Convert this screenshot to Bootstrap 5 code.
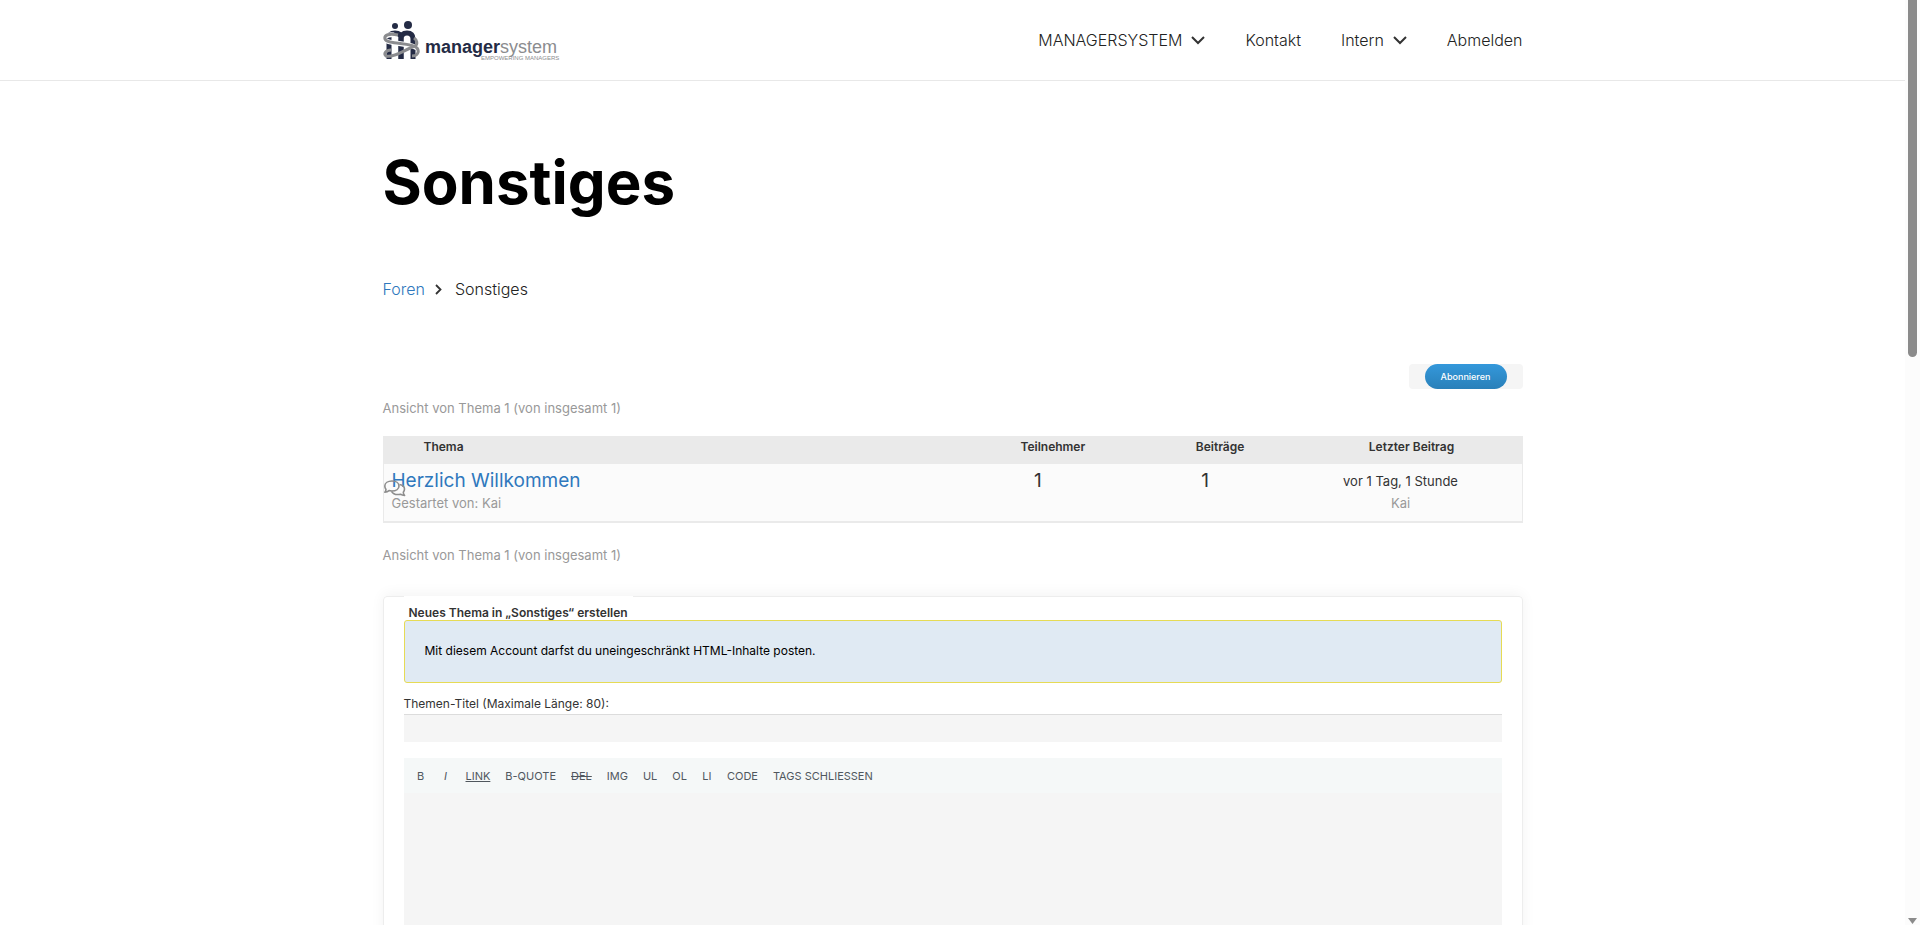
<!DOCTYPE html>
<html lang="de">
<head>
<meta charset="utf-8">
<meta name="viewport" content="width=device-width, initial-scale=1">
<title>Sonstiges – managersystem</title>
<link rel="stylesheet" href="https://cdn.jsdelivr.net/npm/bootstrap@5.3.0/dist/css/bootstrap.min.css">
<style>
  html { overflow: hidden; }
  body { font-family: Inter, "Liberation Sans", sans-serif; font-size: 13px; line-height: 20px; color: #333; padding-right: 15px; height: 100vh; overflow: hidden; }
  a { color: #2f78bd; text-decoration: none; }
  .page-width { max-width: 1140px; margin: 0 auto; }
  .site-header { height: 81px; border-bottom: 1px solid #e8e8e8; }
  .site-nav { font-size: 16px; font-weight: 300; gap: 40px; }
  .site-nav a { color: #222; display: flex; align-items: center; gap: 9px; }
  .brand-text { font-family: "Liberation Sans", sans-serif; }
  .page-title { font-size: 60px; line-height: 76px; font-weight: 700; color: #000; margin: 63px 0 0; }
  .crumbs { font-size: 16px; line-height: 24px; font-weight: 300; margin-top: 57px; gap: 10px; }
  .crumbs span { margin-left: 3px; color: #222; }
  .subscribe { width: 114px; height: 25px; background: #f5f5f5; border-radius: 4px; margin: 63px 0 0 auto; }
  .subscribe button { display: block; width: 82px; height: 25px; margin: 0 auto; border: 0; border-radius: 13px; background: linear-gradient(#3498db, #2980b9); color: #fff; font-size: 9px; font-weight: 500; line-height: 25px; padding: 0; }
  .count-note { color: #999; line-height: 20px; margin: 9px 0 18px; }
  .count-note-end { margin: 22px 0 0; }
  .topics { width: 100%; table-layout: fixed; border: 1px solid #eaeaea; border-bottom: 2px solid #eaeaea; border-collapse: separate; border-spacing: 0; background: #fbfbfb; }
  .topics th { height: 27px; background: #eaeaea; font-size: 12px; line-height: 20px; font-weight: 600; text-align: center; vertical-align: top; padding: 0 0 0 30px; }
  .topics th:first-child { text-align: left; padding-left: 40px; }
  .topics th:last-child { padding-right: 36px; }
  .topics td { height: 57px; text-align: center; vertical-align: top; padding: 5px 0 0; font-size: 19px; line-height: 24px; }
  .topics td:first-child { text-align: left; padding-left: 8px; position: relative; }
  .topics td:last-child { font-size: 13px; padding-right: 28px; }
  .topics small { display: block; font-size: 13px; line-height: 20px; color: #999; }
  .topics small a { color: #999; }
  .topic-icon { position: absolute; left: 0; top: 16px; }
  .new-topic { border: 1px solid #ededed; border-radius: 4px; box-shadow: 0 -2px 14px rgba(0,0,0,.05); background: #fff; padding: 0 20px 20px; margin-top: 31px; font-size: 12px; }
  .new-topic legend { width: auto; font-size: 12px; line-height: 16px; font-weight: 600; background: #fff; margin: -1px 0 -2px; padding: 9px 5px 1px; }
  .html-notice { clear: both; height: 63px; border: 1px solid #e6db55; border-radius: 3px; background: #e0eaf3; color: #000; padding: 20px; margin: 0; position: relative; }
  .title-label { display: block; line-height: 20px; margin-top: 11px; }
  .title-input { display: block; width: 100%; height: 28px; border: 0; border-top: 1px solid #dcdcdc; background: #f5f5f5; }
  .tags-bar { height: 35px; background: #f5f8f8; margin-top: 16px; padding-left: 5px; gap: 1px; }
  .tags-bar button { border: 0; background: none; min-width: 24px; padding: 0 7px; font-size: 11px; line-height: 20px; color: #50575e; }
  .topic-text { display: block; width: 100%; height: 240px; border: 0; background: #f5f5f5; resize: none; }
  .scroll-rail { position: fixed; top: 0; right: 0; bottom: 0; width: 15px; background: #fcfcfc; }
  .scroll-thumb { width: 9px; height: 357px; margin: 0 auto; background: #8b8b8b; border-radius: 0 0 5px 5px; }
  .scroll-arrow { position: absolute; left: 3px; bottom: 1px; }
</style>
</head>
<body>
<header class="site-header">
  <div class="page-width h-100 d-flex align-items-center justify-content-between">
    <a href="#" aria-label="managersystem">
      <svg width="180" height="42" viewBox="0 0 180 42" class="d-block">
        <g fill="none" stroke="#242b45" stroke-width="5">
          <path d="M6 40V19q0-5 6-5t6 5V40"/>
          <path d="M18 40V20q0-6 6-6t6 6V40"/>
        </g>
        <circle cx="12" cy="7" r="3" fill="#242b45"/><circle cx="25" cy="6" r="4" fill="#242b45"/>
        <g fill="none" stroke="#fff" stroke-width="5"><path d="M11 16C4 15 0 18 2 21c3 4 25 3 32 8"/></g>
        <g fill="none" stroke="#8b8c8f" stroke-width="3"><path d="M15 16C6 14 1 16 2 20c2 6 27 3 32 9 3 4 0 8-5 8"/><path d="M8 31c-5 0-8 4-5 6 8 2 18-6 29-10 3-2 2-6-1-8"/></g>
        <g class="brand-text"><text x="42" y="34" font-size="18" font-weight="700" fill="#242b45">manager</text><text x="117" y="34" font-size="18" fill="#8b8c8f">system</text></g>
        <text class="brand-text" x="98" y="41" font-size="6" fill="#8b8c8f">EMPOWERING MANAGERS</text>
      </svg>
    </a>
    <nav class="site-nav d-flex" aria-label="Hauptmenü">
      <a href="#">MANAGERSYSTEM <svg width="14" height="9" viewBox="0 0 14 9"><path d="M1 1l6 6 6-6" fill="none" stroke="#333" stroke-width="2"/></svg></a>
      <a href="#">Kontakt</a>
      <a href="#">Intern <svg width="14" height="9" viewBox="0 0 14 9"><path d="M1 1l6 6 6-6" fill="none" stroke="#333" stroke-width="2"/></svg></a>
      <a href="#">Abmelden</a>
    </nav>
  </div>
</header>

<main class="page-width">
  <h1 class="page-title">Sonstiges</h1>
  <nav class="crumbs d-flex align-items-center" aria-label="Brotkrumen">
    <a href="#">Foren</a>
    <svg width="7" height="11" viewBox="0 0 7 11"><path d="M1 1l4.500 4.500L1 10" fill="none" stroke="#333" stroke-width="1.800"/></svg>
    <span>Sonstiges</span>
  </nav>
  <div class="subscribe"><button type="button">Abonnieren</button></div>
  <p class="count-note">Ansicht von Thema 1 (von insgesamt 1)</p>
  <table class="topics">
    <colgroup><col style="width:51.8%"><col style="width:11.4%"><col style="width:18%"><col></colgroup>
    <thead><tr><th>Thema</th><th>Teilnehmer</th><th>Beiträge</th><th>Letzter Beitrag</th></tr></thead>
    <tbody><tr>
      <td>
        <svg class="topic-icon" width="22" height="18" viewBox="0 0 22 18" fill="none" stroke="#8d8d8d" stroke-width="1.600" stroke-linejoin="round"><path d="M8 1c4 0 7 2 7 5s-3 5-7 5c-1 0-2 0-3-.4C4 11.500 3 12 .8 12.200c.8-.8 1.200-1.600 1.200-2.700C1.300 8.500.8 7.300.8 6 .8 3 4 1 8 1z"/><path d="M15.500 4.500c3 .5 5 2.300 5 4.600 0 1.300-.4 2.200-1.200 3.100 0 1.300.4 2.300 1.300 3.300-2-.1-3.200-.6-4.200-1.300-4 .8-7.400-.3-8.900-2.900"/></svg>
        <a href="#">Herzlich Willkommen</a>
        <small>Gestartet von: <a href="#">Kai</a></small>
      </td>
      <td>1</td><td>1</td>
      <td>vor 1 Tag, 1 Stunde<small><a href="#">Kai</a></small></td>
    </tr></tbody>
  </table>
  <p class="count-note count-note-end">Ansicht von Thema 1 (von insgesamt 1)</p>

  <form>
    <fieldset class="new-topic">
      <legend>Neues Thema in „Sonstiges“ erstellen</legend>
      <p class="html-notice">Mit diesem Account darfst du uneingeschränkt HTML-Inhalte posten.</p>
      <label class="title-label" for="topic-title">Themen-Titel (Maximale Länge: 80):</label>
      <input class="title-input" id="topic-title" type="text" maxlength="80">
      <div class="tags-bar d-flex align-items-center">
        <button type="button">B</button><button type="button" class="fst-italic">I</button><button type="button" class="text-decoration-underline">LINK</button><button type="button">B-QUOTE</button><button type="button" class="text-decoration-line-through">DEL</button><button type="button">IMG</button><button type="button">UL</button><button type="button">OL</button><button type="button">LI</button><button type="button">CODE</button><button type="button">TAGS SCHLIESSEN</button>
      </div>
      <textarea class="topic-text" aria-label="Beitrag"></textarea>
    </fieldset>
  </form>
</main>

<div class="scroll-rail" aria-hidden="true">
  <div class="scroll-thumb"></div>
  <svg class="scroll-arrow" width="9" height="6" viewBox="0 0 9 6"><path d="M0 0h9L4.500 6z" fill="#8b8b8b"/></svg>
</div>
<script src="https://cdn.jsdelivr.net/npm/bootstrap@5.3.0/dist/js/bootstrap.bundle.min.js"></script>
</body>
</html>
